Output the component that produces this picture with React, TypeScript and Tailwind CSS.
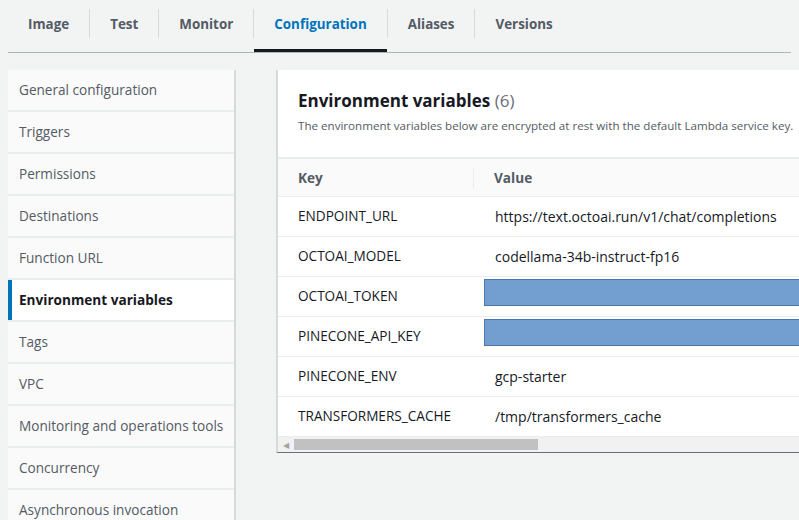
const FONT = "font-['Open_Sans',sans-serif]";

const TABS = ['Image', 'Test', 'Monitor', 'Configuration', 'Aliases', 'Versions'];

const NAV = [
    'General configuration',
    'Triggers',
    'Permissions',
    'Destinations',
    'Function URL',
    'Environment variables',
    'Tags',
    'VPC',
    'Monitoring and operations tools',
    'Concurrency',
    'Asynchronous invocation',
];

const VARS: { key: string; value: string | null }[] = [
    { key: 'ENDPOINT_URL', value: 'https://text.octoai.run/v1/chat/completions' },
    { key: 'OCTOAI_MODEL', value: 'codellama-34b-instruct-fp16' },
    { key: 'OCTOAI_TOKEN', value: null },
    { key: 'PINECONE_API_KEY', value: null },
    { key: 'PINECONE_ENV', value: 'gcp-starter' },
    { key: 'TRANSFORMERS_CACHE', value: '/tmp/transformers_cache' },
];

function Tabs() {
    return (
        <div className="mx-2 flex h-[53px] border-b border-[#aab7b8]">
            {TABS.map((tab, i) => {
                const active = tab === 'Configuration';
                return (
                    <div key={tab} className="flex items-start">
                        {i > 0 && <div className="mt-[9px] h-[29px] w-px bg-[#d5dbdb]" />}
                        <div className="flex h-[52px] flex-col justify-between">
                            <span
                                className={`px-5 pt-[14px] text-[13.4px] leading-[20px] font-bold ${
                                    active ? 'text-[#0073bb]' : 'text-[#545b64]'
                                }`}
                            >
                                {tab}
                            </span>
                            <span className={`h-[3px] w-full ${active ? 'bg-[#16191f]' : ''}`} />
                        </div>
                    </div>
                );
            })}
        </div>
    );
}

function Sidebar() {
    return (
        <div className="flex w-[228px] shrink-0 flex-col gap-[2px] self-start border-r-2 border-[#d5dbdb] bg-[#eaeded]">
            {NAV.map((item) => {
                const active = item === 'Environment variables';
                return (
                    <div
                        key={item}
                        className={`flex h-[40px] items-center pt-px text-[13.6px] ${
                            active
                                ? 'border-l-4 border-[#0073bb] bg-white pl-[7px] font-bold text-[#16191f]'
                                : 'bg-[#fafafa] pl-[11px] text-[#545b64]'
                        }`}
                    >
                        {item}
                    </div>
                );
            })}
        </div>
    );
}

function EnvCard() {
    return (
        <div className="flex w-[600px] shrink-0 flex-col self-start border-l-2 border-b border-[#d5dbdb] border-b-[#687078] bg-white">
            <div className="h-[87px] px-5 pt-[19px]">
                <h2 className="text-[17px] leading-[24px] font-bold text-[#16191f]">
                    Environment variables <span className="font-normal text-[#687078]">(6)</span>
                </h2>
                <p className="mt-[5px] text-[11.6px] leading-[16px] text-[#545b64]">
                    The environment variables below are encrypted at rest with the default Lambda service key.
                </p>
            </div>
            <div className="flex h-[40px] items-center border-t-2 border-b border-[#eaeded] bg-[#fafafa] pt-px text-[13.6px] font-bold text-[#545b64]">
                <div className="flex w-[196px] items-center justify-between pl-5">
                    <span>Key</span>
                    <span className="h-[20px] w-px bg-[#eaeded]" />
                </div>
                <div className="pl-5">Value</div>
            </div>
            {VARS.map((v) => (
                <div
                    key={v.key}
                    className="flex h-[40px] items-center border-b border-[#eaeded] text-[14px] text-[#16191f] last:border-b-0"
                >
                    <div className="w-[197px] shrink-0 pl-5 text-[13.6px]">{v.key}</div>
                    {v.value ? (
                        <div className="pl-5">{v.value}</div>
                    ) : (
                        <div className="mb-[9px] ml-[9px] h-[27px] flex-1 border border-[#4b78aa] bg-[#729fcf]" />
                    )}
                </div>
            ))}
            <div className="flex h-[15px] items-center gap-[5px] bg-[#f1f1f1] pl-[5px]">
                <span className="text-[8px] leading-none text-[#a3a3a3]">◀</span>
                <div className="h-[11px] w-[244px] bg-[#c1c1c1]" />
            </div>
        </div>
    );
}

export default function App() {
    return (
        <div className={`h-[520px] w-[799px] overflow-hidden bg-[#f2f3f3] ${FONT}`}>
            <Tabs />
            <div className="mt-[17px] flex gap-[40px] pl-2">
                <Sidebar />
                <EnvCard />
            </div>
        </div>
    );
}
